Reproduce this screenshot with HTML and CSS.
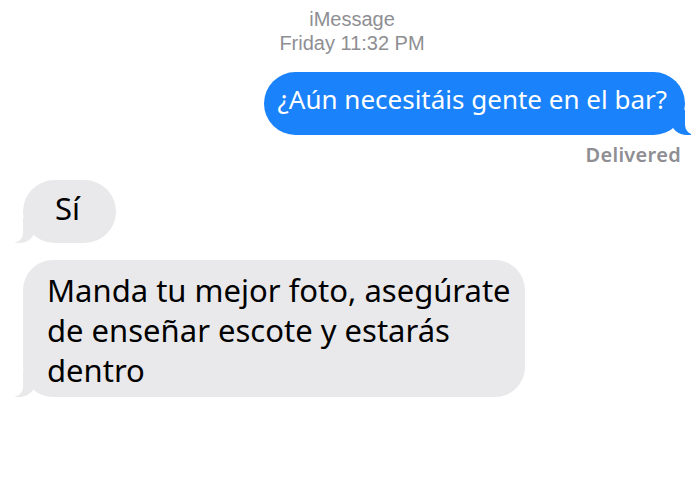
FILE: index.html
```html
<!DOCTYPE html>
<html lang="es">
<head>
<meta charset="UTF-8" />
<meta name="viewport" content="width=device-width, initial-scale=1.0" />
<title>iMessage</title>
<link rel="stylesheet" href="styles.css">
</head>
<body>

<div class="thread">
  <div class="meta">
    <div>iMessage</div>
    <div>Friday 11:32 PM</div>
  </div>

  <div class="row sent">
    <div class="bubble blue">¿Aún necesitáis gente en el bar?</div>
  </div>
  <div class="status">Delivered</div>

  <div class="row received">
    <div class="bubble gray short">Sí</div>
  </div>
  <div class="row received">
    <div class="bubble gray long">Manda tu mejor foto, asegúrate de enseñar escote y estarás dentro</div>
  </div>
</div>

</body>
</html>
```

FILE: styles.css
```css
body {
  margin: 0;
  background: #fff;
  font-family: "Noto Sans", "Open Sans", sans-serif;
}
.thread {
  display: flex;
  flex-direction: column;
  padding: 7px 15px 0 23px;
}
.meta {
  text-align: center;
  color: #8e8e93;
  font-family: "Liberation Sans", Arial, sans-serif;
  font-size: 20px;
  line-height: 24px;
  padding-right: 4px;
}
.row {
  display: flex;
}
.sent {
  justify-content: flex-end;
  margin-top: 17px;
}
.received {
  justify-content: flex-start;
}
.bubble {
  position: relative;
  line-height: 40px;
  border-radius: 32px;
}
.blue {
  background: #1a82fb;
  color: #fff;
  font-size: 26px;
  padding: 7px 18px 16px 14px;
}
.gray {
  background: #e9e9eb;
  color: #000;
  font-size: 31px;
}
.short {
  padding: 8px 36px 15px 32px;
  margin-top: 13px;
}
.long {
  width: 470px;
  padding: 10px 8px 7px 24px;
  margin-top: 17px;
  border-radius: 30px;
}
.status {
  text-align: right;
  color: #8e8e93;
  font-size: 20px;
  font-weight: 600;
  letter-spacing: 0.3px;
  line-height: 24px;
  margin-top: 8px;
  padding-right: 4px;
}
/* tails */
.bubble::before,
.bubble::after {
  content: "";
  position: absolute;
  bottom: 0;
  height: 25px;
}
.blue::before {
  right: -6px;
  width: 20px;
  background: #1a82fb;
  border-bottom-left-radius: 16px 14px;
}
.blue::after {
  right: -26px;
  width: 26px;
  background: #fff;
  border-bottom-left-radius: 10px;
}
.gray::before {
  left: -8px;
  width: 20px;
  background: #e9e9eb;
  border-bottom-right-radius: 16px 14px;
}
.gray::after {
  left: -26px;
  width: 26px;
  background: #fff;
  border-bottom-right-radius: 10px;
}
```
